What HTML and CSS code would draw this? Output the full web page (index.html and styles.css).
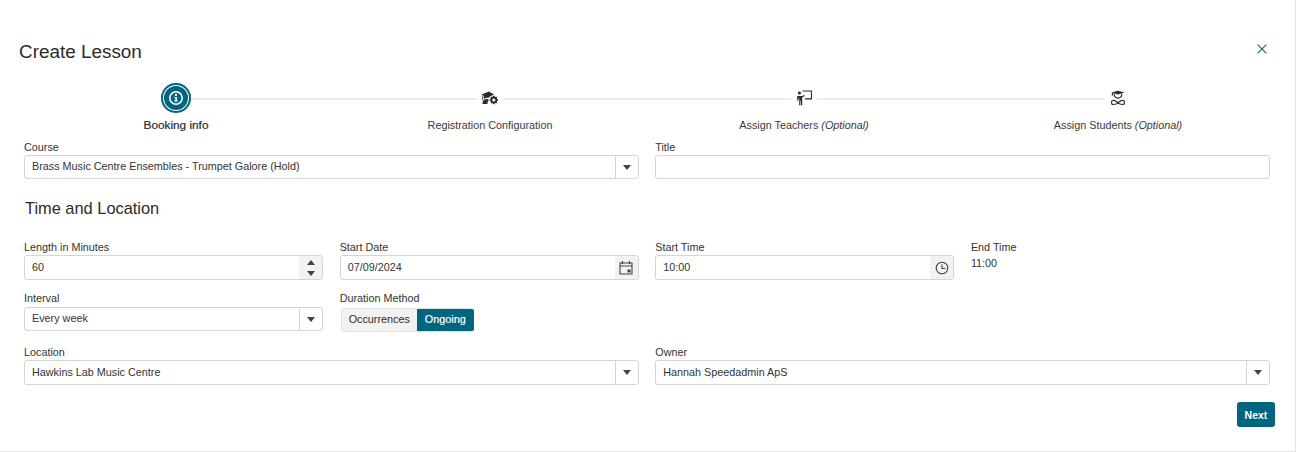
FILE: index.html
```html
<!DOCTYPE html>
<html lang="en">
<head>
<meta charset="utf-8">
<title>Create Lesson</title>
<link rel="stylesheet" href="styles.css">
</head>
<body>
<div class="dialog">
  <header class="head">
    <h1 class="title">Create Lesson</h1>
    <button class="close" aria-label="Close"><svg width="10" height="10" viewBox="0 0 10 10"><path d="M.6.6l8.8 8.8M9.400.6L.6 9.400" stroke="#1f5f75" stroke-width="1.100" fill="none"/></svg></button>
  </header>
  <ol class="stepper">
    <li class="step current">
      <span class="step-icon"><span class="disc"><svg width="16" height="16" viewBox="0 0 16 16"><circle cx="8" cy="8" r="6.200" fill="none" stroke="#fff" stroke-width="1.500"/><circle cx="8" cy="4.900" r="1.100" fill="#fff"/><path d="M6.400 6.900h2.500v3.600h1v1.100H6.200v-1.100h1.100V8H6.400z" fill="#fff"/></svg></span></span>
      <span class="step-label strong">Booking info</span>
    </li>
    <li class="step">
      <span class="step-icon"><svg width="18" height="14" viewBox="0 0 18 14"><path d="M8 .5L.3 3.600 3 4.700v3.200C4 7 6 6.500 7.800 6.700c.6-1 1.500-1.700 2.600-2L13 3.600z" fill="#2b2b2b"/><path d="M1.300 4.200v5H2.200v-4.700z" fill="#2b2b2b"/><path d="M3 8.800c1.300-.7 3-.9 4.400-.7l.1 2.200c-1 .2-1.200 1.500-.9 2.700H1.500c0-1.600.4-3.300 1.500-4.200z" fill="#2b2b2b"/><circle cx="12.800" cy="9" r="2.500" fill="none" stroke="#2b2b2b" stroke-width="1.900"/><path d="M12.800 4.800v1.300M12.800 11.900v1.300M8.600 9h1.300M15.700 9h1.300M9.900 6.100l1 1M14.700 10.900l1 1M15.700 6.100l-1 1M10.900 10.900l-1 1" stroke="#2b2b2b" stroke-width="1.400"/></svg></span>
      <span class="step-label">Registration Configuration</span>
    </li>
    <li class="step">
      <span class="step-icon"><svg width="16" height="16" viewBox="0 0 16 16"><circle cx="3.500" cy="3" r="1.600" fill="#2b2b2b"/><path d="M1.200 6h4.700l2.300-1 .5 1-2.500 1.500v7.800H5v-4.500h-.6v4.500H3.200V8.500h-.8v2.300H1.200z" fill="#2b2b2b"/><path d="M6.500 1H15.500V8.800H9" fill="none" stroke="#2b2b2b" stroke-width="1.200"/></svg></span>
      <span class="step-label">Assign Teachers <em>(Optional)</em></span>
    </li>
    <li class="step">
      <span class="step-icon"><svg width="14" height="16" viewBox="0 0 14 16"><path d="M7 .8L.3 2.600 7 4.400l6.700-1.800z" fill="#2b2b2b"/><path d="M1.400 3v2.500M3.300 3.800c-.2 2.700 1 4.300 3.700 4.300s3.900-1.600 3.700-4.300" fill="none" stroke="#2b2b2b" stroke-width="1.200"/><path d="M7 13.200c-1-2.400-5.500-3.600-6-2.400-.5 1.300-.3 3 .2 3.700 1.700 0 4.500-.6 5.800-1.300zm0 0c1-2.400 5.500-3.600 6-2.400.5 1.300.3 3-.2 3.700-1.700 0-4.500-.6-5.800-1.300z" fill="none" stroke="#2b2b2b" stroke-width="1.200"/></svg></span>
      <span class="step-label">Assign Students <em>(Optional)</em></span>
    </li>
  </ol>
  <form class="form">
    <div class="row row-top">
      <div class="field half">
        <label class="label">Course</label>
        <div class="box"><span class="value">Brass Music Centre Ensembles - Trumpet Galore (Hold)</span><span class="addon plain"><i class="caret"></i></span></div>
      </div>
      <div class="field half">
        <label class="label">Title</label>
        <div class="box"><span class="value"></span></div>
      </div>
    </div>
    <h2 class="section">Time and Location</h2>
    <div class="row row-a">
      <div class="field">
        <label class="label">Length in Minutes</label>
        <div class="box tall"><span class="value">60</span><span class="addon spin"><i class="caret up"></i><i class="caret"></i></span></div>
      </div>
      <div class="field">
        <label class="label">Start Date</label>
        <div class="box tall"><span class="value">07/09/2024</span><span class="addon shaded"><svg width="14" height="15" viewBox="0 0 14 15"><path d="M1 3h12v11H1zM1 6h12" fill="none" stroke="#424242" stroke-width="1.100"/><path d="M3.500 1v3M10.500 1v3" stroke="#424242" stroke-width="1.200"/><path d="M8.500 9.500h3v3h-3z" fill="#424242"/></svg></span></div>
      </div>
      <div class="field">
        <label class="label">Start Time</label>
        <div class="box tall"><span class="value">10:00</span><span class="addon shaded"><svg width="14" height="14" viewBox="0 0 14 14"><circle cx="7" cy="7" r="5.800" fill="none" stroke="#424242" stroke-width="1.100"/><path d="M7 3.500V7.500H10.500" fill="none" stroke="#424242" stroke-width="1.100"/></svg></span></div>
      </div>
      <div class="field">
        <label class="label">End Time</label>
        <span class="static">11:00</span>
      </div>
    </div>
    <div class="row row-b">
      <div class="field">
        <label class="label">Interval</label>
        <div class="box"><span class="value">Every week</span><span class="addon plain"><i class="caret"></i></span></div>
      </div>
      <div class="field">
        <label class="label">Duration Method</label>
        <div class="toggle"><span class="opt">Occurrences</span><span class="opt on">Ongoing</span></div>
      </div>
    </div>
    <div class="row row-c">
      <div class="field half">
        <label class="label">Location</label>
        <div class="box tall"><span class="value">Hawkins Lab Music Centre</span><span class="addon plain"><i class="caret"></i></span></div>
      </div>
      <div class="field half">
        <label class="label">Owner</label>
        <div class="box tall"><span class="value">Hannah Speedadmin ApS</span><span class="addon plain"><i class="caret"></i></span></div>
      </div>
    </div>
    <div class="actions"><button type="button" class="next">Next</button></div>
  </form>
</div>
</body>
</html>
```
FILE: styles.css
```css
* { box-sizing: border-box; }
html, body { margin: 0; padding: 0; background: #fff; }
body { font-family: "Liberation Sans", Arial, sans-serif; font-size: 10.800px; color: #2f2f2f; }
.dialog {
  height: 452px;
  padding: 39px 20px 0 19px;
  border-right: 1px solid #e6e6e6;
  border-bottom: 1px solid #e6e6e6;
}
.head { display: flex; justify-content: space-between; align-items: flex-start; height: 41px; }
.title { margin: 0; font-size: 18.900px; font-weight: 400; line-height: 25px; color: #2b2b2b; }
.close { border: 0; background: none; padding: 0; margin: 5px 8px 0 0; width: 10px; height: 10px; display: flex; }
.stepper {
  list-style: none; margin: 0; padding: 0; height: 61px;
  display: grid; grid-template-columns: repeat(4, 1fr);
  background: linear-gradient(#ebebeb, #ebebeb) no-repeat center 18px / 75% 2px;
}
.step { display: flex; flex-direction: column; align-items: center; }
.step-icon { width: 26px; height: 38px; padding-bottom: 2px; background: #fff; display: flex; align-items: center; justify-content: center; }
.step.current .step-icon { width: 30px; }
.disc {
  width: 30px; height: 30px; border-radius: 50%; background: #00657f;
  box-shadow: inset 0 0 0 2px #00657f, inset 0 0 0 3px #fff;
  display: flex; align-items: center; justify-content: center; flex: none;
}
.step-label { line-height: 14px; color: #3a3a3a; }
.step-label.strong { color: #2b2b2b; font-size: 11.800px; -webkit-text-stroke: .2px #2b2b2b; }
.form { padding: 0 5px; }
.row { display: grid; grid-template-columns: repeat(4, 1fr); column-gap: 16.500px; }
.half { grid-column: span 2; }
.field { min-width: 0; }
.label { display: block; line-height: 12px; height: 13px; margin-bottom: 1px; color: #333; }
.box { display: flex; height: 24px; border: 1px solid #d5d5d5; border-radius: 3px; background: #fff; }
.box.tall { height: 25px; }
.value { flex: 1; padding: 0 7px; line-height: 21px; color: #333; white-space: nowrap; overflow: hidden; }
.tall .value { line-height: 23px; }
.addon { width: 23px; display: flex; align-items: center; justify-content: center; flex: none; }
.addon.plain { border-left: 1px solid #d5d5d5; }
.addon.shaded, .addon.spin { background: #f2f2f2; border-radius: 0 3px 3px 0; }
.addon.spin { flex-direction: column; gap: 6px; }
.caret { width: 0; height: 0; border-left: 4.500px solid transparent; border-right: 4.500px solid transparent; border-top: 5.500px solid #424242; display: block; }
.caret.up { border-top: 0; border-bottom: 5.500px solid #424242; }
.section { margin: 20px 0 0; padding-left: 1px; height: 42px; font-size: 16.400px; font-weight: 400; line-height: 18px; color: #2b2b2b; }
.row-a { height: 51px; }
.static { display: block; margin-top: 2px; line-height: 14px; color: #333; }
.row-b .label { margin-bottom: 2px; }
.row-b .field:nth-child(2) { grid-column: span 2; }
.toggle { display: inline-flex; height: 24px; margin: 1px 0 0 1px; border-radius: 3px; overflow: hidden; border: 1px solid #e2e2e2; border-right: 0; background: #f2f2f2; }
.opt { padding: 0 7px; line-height: 21px; color: #2b2b2b; }
.opt.on { background: #00657f; color: #fff; -webkit-text-stroke: .2px #fff; padding: 0 8px; margin: -1px 0; line-height: 23px; }
.row-c { margin-top: 14px; }
.actions { display: flex; justify-content: flex-end; margin: 17px -5px 0 0; }
.next { height: 25px; width: 38px; border: 0; border-radius: 3px; padding: 0; background: #00657f; color: #fff; font: 700 10.500px "Liberation Sans", Arial, sans-serif; }
```
